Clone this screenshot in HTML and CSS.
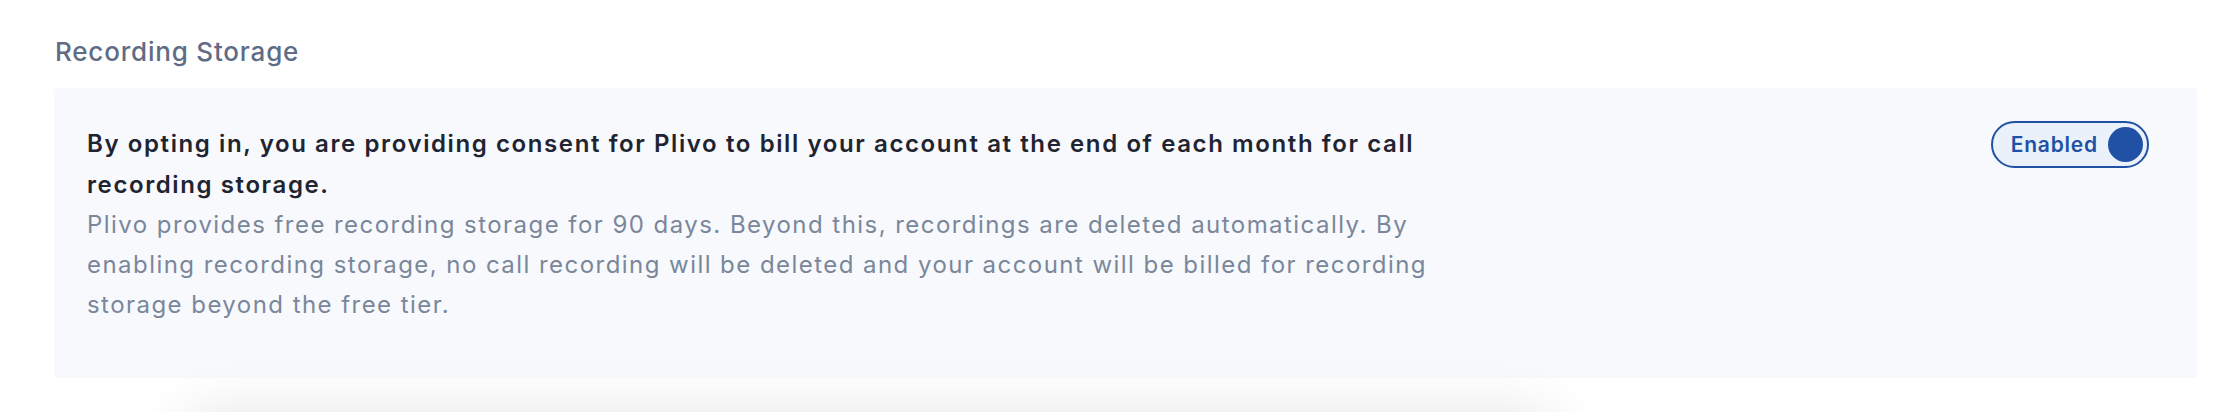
FILE: index.html
```html
<!DOCTYPE html>
<html lang="en">
<head>
    <meta charset="UTF-8">
    <meta name="viewport" content="width=device-width, initial-scale=1.0">
    <title>Recording Storage</title>
    <link rel="stylesheet" href="styles.css">
</head>
<body>
    <!-- 录音存储设置 -->
    <div class="section">
        <h2 class="section-title">Recording Storage</h2>
        <div class="panel">
            <div class="panel-text">
                <p class="consent">By opting in, you are providing consent for Plivo to bill your account at the end of each month for call recording storage.</p>
                <p class="note">Plivo provides free recording storage for 90 days. Beyond this, recordings are deleted automatically. By enabling recording storage, no call recording will be deleted and your account will be billed for recording storage beyond the free tier.</p>
            </div>
            <!-- 开关按钮 -->
            <a class="toggle" href="javascript:;">
                <span class="toggle-label">Enabled</span>
                <span class="toggle-knob"></span>
            </a>
        </div>
        <div class="next-card"></div>
    </div>
</body>
</html>
```

FILE: styles.css
```css
*{
    margin:0;
    padding:0;
    box-sizing: border-box;
}
body{
    background-color:#fff;
    font-family: Inter, Lato, sans-serif;
    overflow: hidden;
    height: 412px;
}
.section{
    padding: 36px 43px 0 54px;
}
.section-title{
    font-size: 26px;
    font-weight: 500;
    color:#5f6c85;
    line-height: 32px;
    margin-bottom: 20px;
    padding-left: 1px;
    letter-spacing: 0.8px;
}
/*灰色面板*/
.panel{
    display: flex;
    justify-content: space-between;
    align-items: flex-start;
    background-color:#f7f9fd;
    border-radius: 4px;
    padding: 34px 48px 53px 33px;
}
.panel-text{
    width: 1390px;
    margin-top: 1px;
}
.consent{
    font-size: 24px;
    font-weight: 600;
    line-height: 41px;
    color:#1f2430;
    letter-spacing: 1.6px;
}
.note{
    font-size: 24px;
    font-weight: 400;
    line-height: 40px;
    color:#7a879b;
    letter-spacing: 1.45px;
}
/*开关*/
.toggle{
    display: flex;
    align-items: center;
    gap: 10px;
    height: 47px;
    margin-top: -1px;
    padding: 0 4px 0 18px;
    border: 2px solid #2151a4;
    border-radius: 24px;
    background-color:#eaf1fb;
    text-decoration: none;
}
.toggle-label{
    font-size: 21px;
    font-weight: 600;
    color:#2151a4;
    letter-spacing: 0.8px;
}
.toggle-knob{
    width: 35px;
    height: 35px;
    border-radius: 50%;
    background-color:#2151a4;
}
/*下方卡片的阴影*/
.next-card{
    margin: 60px 0 0 150px;
    width: 1330px;
    height: 120px;
    background-color:#fff;
    border-radius: 12px;
    box-shadow: 0 0 60px 24px rgba(0,0,0,0.11);
}
```
